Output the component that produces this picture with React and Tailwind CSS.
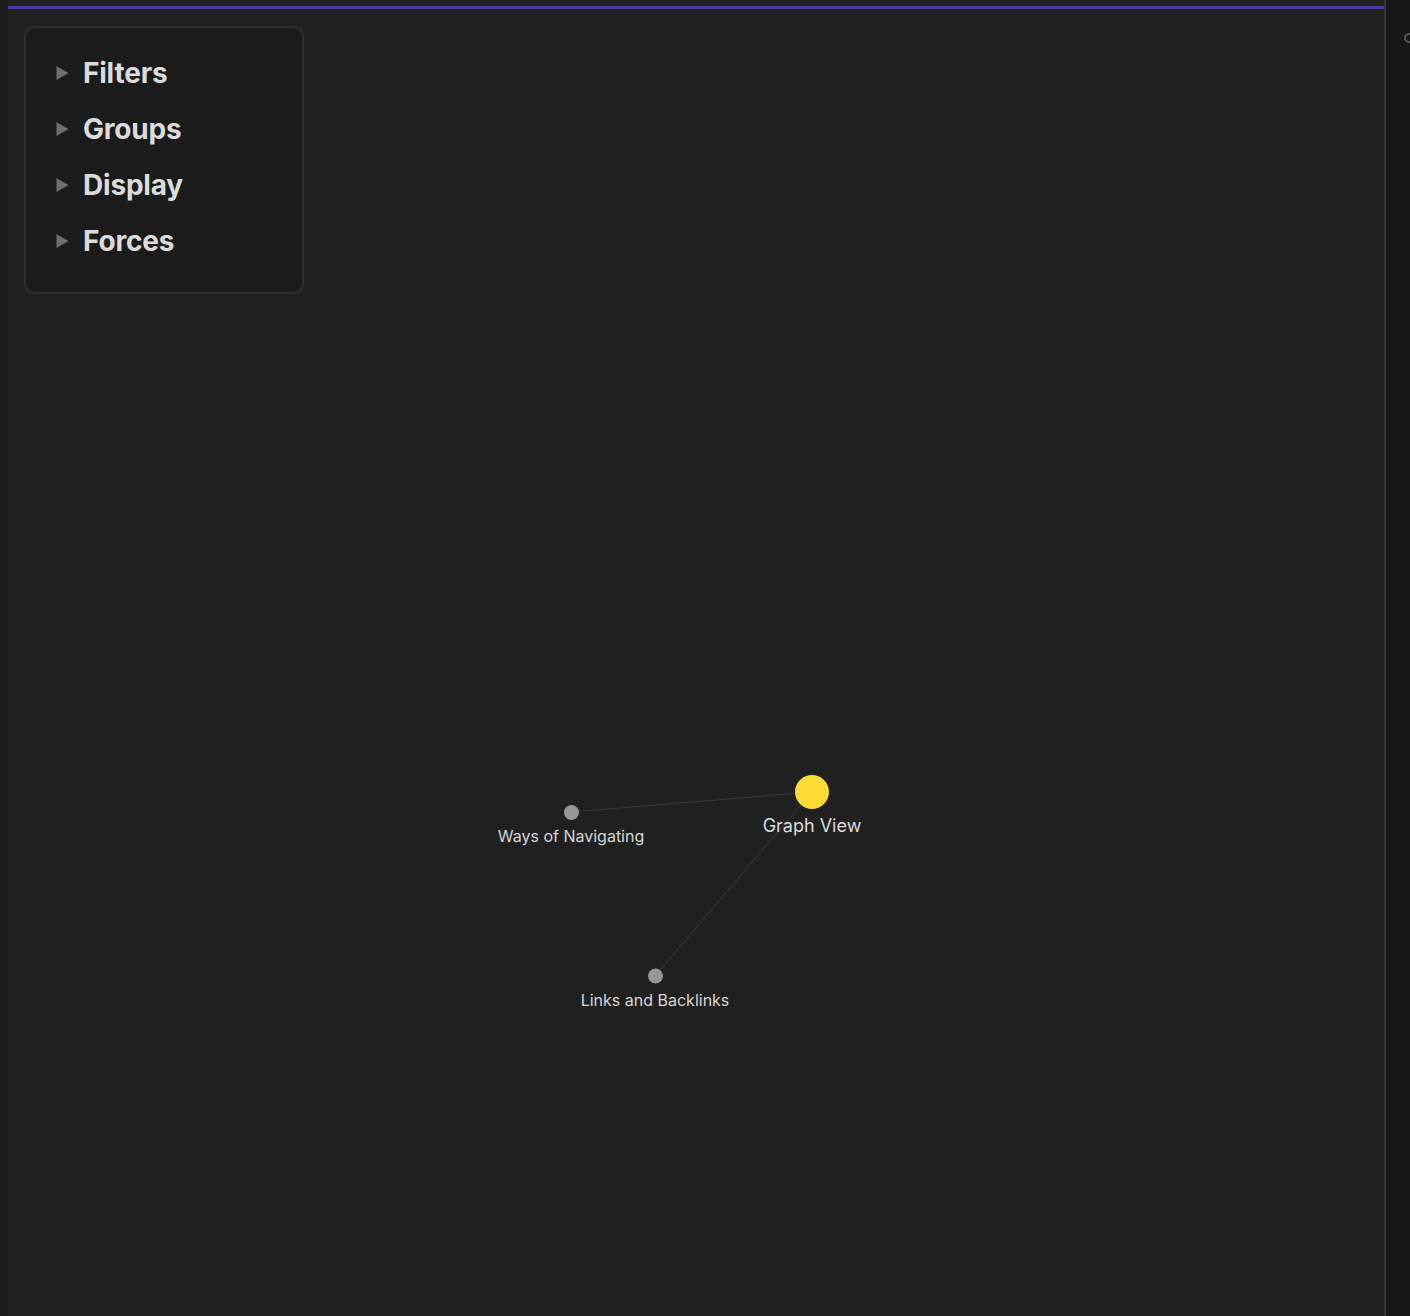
export default function App() {
  const items = ["Filters", "Groups", "Display", "Forces"];
  return (
    <div className="w-[1410px] h-[1316px] flex bg-[#1a1a1a] overflow-hidden" style={{ fontFamily: "Inter, 'Noto Sans', sans-serif" }}>
      <div className="w-[8px] shrink-0 bg-[#1b1b1b]" />
      <div className="relative flex-1 bg-[#202020]">
        <div className="h-[6px] bg-[#202020]" />
        <div className="h-[3px] bg-[#483699]" />
        <div className="absolute inset-0">
          <svg width="1376" height="1316" className="absolute left-0 top-0">
            <line x1="563" y1="812" x2="804" y2="792" stroke="#3a3a3a" strokeWidth="1" />
            <line x1="804" y1="792" x2="647" y2="976" stroke="#3a3a3a" strokeWidth="1" />
            <circle cx="563.5" cy="812.5" r="7.5" fill="#979797" />
            <circle cx="647.5" cy="976" r="7.5" fill="#979797" />
            <circle cx="804" cy="792" r="17" fill="#fedb32" />
          </svg>
          <div className="absolute left-[463px] top-[826px] w-[200px] text-center text-[16px] leading-[20px] text-[#d6d6d6]">Ways of Navigating</div>
          <div className="absolute left-[704px] top-[815px] w-[200px] text-center text-[18px] leading-[22px] text-[#dcdcdc]">Graph View</div>
          <div className="absolute left-[547px] top-[990px] w-[200px] text-center text-[16px] leading-[20px] text-[#d6d6d6]">Links and Backlinks</div>
        </div>
        <div className="absolute left-[16px] top-[26px] w-[280px] h-[268px] rounded-[10px] border-2 border-[#2f2f2f] bg-[#1b1b1b] pt-[29px] flex flex-col gap-[24px]">
          {items.map((t) => (
            <div key={t} className="flex items-center h-[32px] pl-[30px]">
              <svg width="13" height="16" viewBox="0 0 13 16" className="mr-[14px]">
                <path d="M0.5 1 L12.5 8 L0.5 15 Z" fill="#6e6e6e" />
              </svg>
              <span className="text-[28px] font-bold text-[#dcdcdc] leading-[32px] tracking-[-0.2px]">{t}</span>
            </div>
          ))}
        </div>
      </div>
      <div className="w-[2px] shrink-0 bg-[#363636]" />
      <div className="relative w-[24px] shrink-0 bg-[#161616]">
        <div className="absolute left-[18px] top-[33px] w-[10px] h-[10px] rounded-full border-2 border-[#555]" />
      </div>
    </div>
  );
}
